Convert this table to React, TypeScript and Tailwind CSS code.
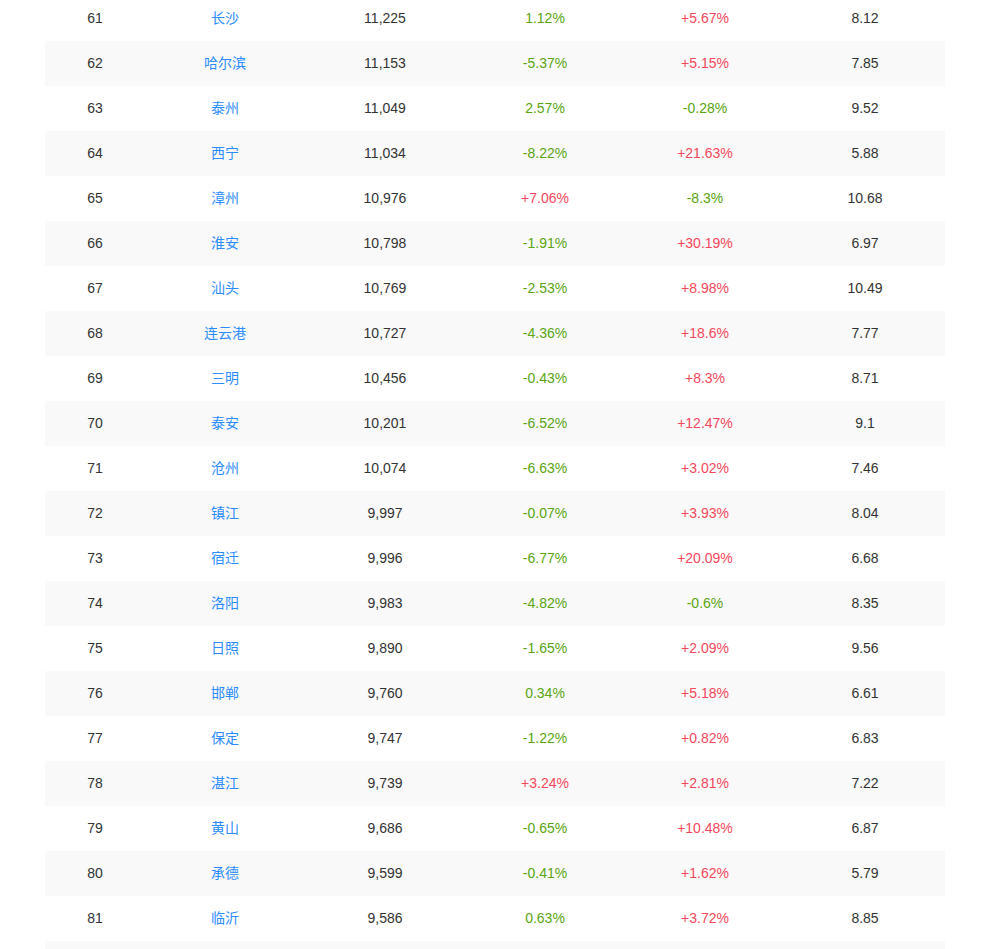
import React from 'react';

type Row = [number, string, string, string, string, string];

const rows: Row[] = [
  [61, '长沙', '11,225', '1.12%', '+5.67%', '8.12'],
  [62, '哈尔滨', '11,153', '-5.37%', '+5.15%', '7.85'],
  [63, '泰州', '11,049', '2.57%', '-0.28%', '9.52'],
  [64, '西宁', '11,034', '-8.22%', '+21.63%', '5.88'],
  [65, '漳州', '10,976', '+7.06%', '-8.3%', '10.68'],
  [66, '淮安', '10,798', '-1.91%', '+30.19%', '6.97'],
  [67, '汕头', '10,769', '-2.53%', '+8.98%', '10.49'],
  [68, '连云港', '10,727', '-4.36%', '+18.6%', '7.77'],
  [69, '三明', '10,456', '-0.43%', '+8.3%', '8.71'],
  [70, '泰安', '10,201', '-6.52%', '+12.47%', '9.1'],
  [71, '沧州', '10,074', '-6.63%', '+3.02%', '7.46'],
  [72, '镇江', '9,997', '-0.07%', '+3.93%', '8.04'],
  [73, '宿迁', '9,996', '-6.77%', '+20.09%', '6.68'],
  [74, '洛阳', '9,983', '-4.82%', '-0.6%', '8.35'],
  [75, '日照', '9,890', '-1.65%', '+2.09%', '9.56'],
  [76, '邯郸', '9,760', '0.34%', '+5.18%', '6.61'],
  [77, '保定', '9,747', '-1.22%', '+0.82%', '6.83'],
  [78, '湛江', '9,739', '+3.24%', '+2.81%', '7.22'],
  [79, '黄山', '9,686', '-0.65%', '+10.48%', '6.87'],
  [80, '承德', '9,599', '-0.41%', '+1.62%', '5.79'],
  [81, '临沂', '9,586', '0.63%', '+3.72%', '8.85'],
  [82, '', '', '', '', ''],
];

// values starting with "+" are red, everything else green
const tone = (v: string) => (v.startsWith('+') ? 'text-[#f5475b]' : 'text-[#5aa510]');

export default function App() {
  return (
    <div
      className="min-h-screen bg-white overflow-hidden"
      style={{ fontFamily: '"Liberation Sans", "Noto Sans CJK SC", sans-serif' }}
    >
      <div className="ml-[45px] w-[900px] -mt-[4px] text-[14px] text-[#333]">
        {rows.map(([rank, city, gdp, g1, g2, ratio], i) => (
          <div
            key={rank}
            className={`flex h-[45px] items-center text-center ${i % 2 === 1 ? 'bg-[#f9f9f9]' : 'bg-white'}`}
          >
            <div className="w-[100px]">{city ? rank : ''}</div>
            <div className="w-[160px] text-[#2b8cff]">{city}</div>
            <div className="w-[160px]">{gdp}</div>
            <div className={`w-[160px] ${tone(g1)}`}>{g1}</div>
            <div className={`w-[160px] ${tone(g2)}`}>{g2}</div>
            <div className="w-[160px]">{ratio}</div>
          </div>
        ))}
      </div>
    </div>
  );
}
